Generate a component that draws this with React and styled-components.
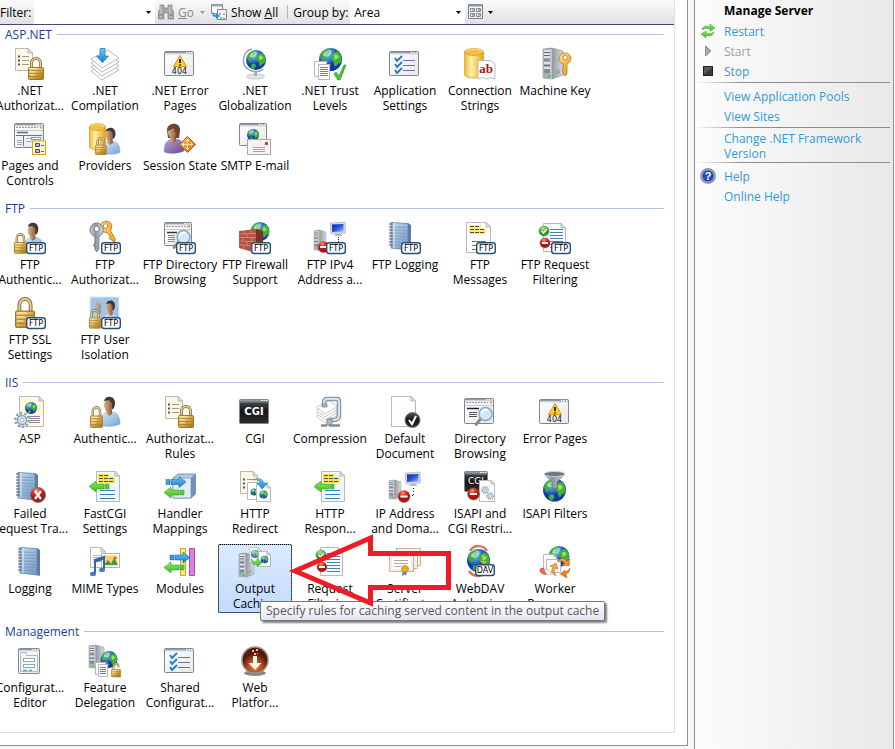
import React from 'react';
import styled, { createGlobalStyle } from 'styled-components';

//ESTILO
const GlobalStyle = createGlobalStyle`
    * {
        box-sizing: border-box;
    }

    body {
        margin: 0;
        background: #f7f7f7;
        color: #000;
        font-family: "Open Sans", "Noto Sans", sans-serif;
        font-size: 12px;
        line-height: 15px;
    }

    button, input, select {
        font: inherit;
        color: inherit;
    }
`
const Page = styled.div`
    display: flex;
    gap: 6px;
    min-height: 100vh;
    padding-right: 1px;
`
const Workspace = styled.main`
    flex: 1;
    min-width: 0;
    display: flex;
    margin-bottom: 3px;
    padding: 0 12px 12px 0;
    background: #fff;
    border: solid #919191;
    border-width: 0 1px 1px 0;
`
const FeatureView = styled.div`
    position: relative;
    flex: 1;
    min-width: 0;
    overflow: hidden;
    border: solid #dfdfdf;
    border-width: 0 1px 1px 0;
`
const Toolbar = styled.div`
    display: flex;
    align-items: center;
    height: 25px;
    background: linear-gradient(#fafafa, #e2e0e1);
    border-bottom: 1px solid #4b4277;
    white-space: nowrap;
`
const FieldLabel = styled.label`
    width: ${props => props.$width}px;
    flex: none;
`
const Combo = styled.div`
    display: flex;
    align-items: center;
    width: ${props => props.$width}px;
    height: 24px;
    padding-right: 4px;
    background: #fff;
`
const ComboInput = styled.input`
    flex: 1;
    min-width: 0;
    height: 22px;
    padding: 0 4px;
    border: 0;
    outline: 0;
    background: transparent;
`
const ComboSelect = styled.select`
    flex: 1;
    min-width: 0;
    height: 22px;
    padding: 0 4px;
    border: 0;
    outline: 0;
    appearance: none;
    background: transparent;
`
const ToolButton = styled.button`
    display: flex;
    align-items: center;
    gap: 4px;
    height: 22px;
    padding: 0 3px;
    border: 0;
    background: transparent;
    color: ${props => props.disabled ? '#8b8b8b' : '#000'};
`
const Separator = styled.span`
    width: 1px;
    height: 14px;
    margin: 0 5px 0 6px;
    background: #bdb9b0;
`
const Group = styled.section`
    & + & {
        margin-top: 3px;
    }
`
const GroupTitle = styled.h2`
    display: flex;
    align-items: center;
    gap: 5px;
    height: 18px;
    margin: 0 10px 3px 5px;
    font-size: 12px;
    font-weight: 400;
    color: #1e3c9c;

    &::after {
        content: '';
        flex: 1;
        height: 1px;
        background: #b4c2e2;
    }
`
const Grid = styled.div`
    display: grid;
    grid-template-columns: repeat(auto-fill, 74px);
    gap: 6px 1px;
    margin: 0 10px 0 -7px;
    padding-bottom: 6px;
`
const Item = styled.button`
    display: flex;
    flex-direction: column;
    align-items: center;
    height: 69px;
    padding: 2px 0 0;
    border: 0;
    border-radius: 2px;
    background: ${props => props.$selected ? 'linear-gradient(#dcebfc, #c1dbfc)' : 'transparent'};
    box-shadow: ${props => props.$selected ? 'inset 0 0 0 1px #7da2ce' : 'none'};
    outline: ${props => props.$selected ? '1px dotted #000' : '0'};
    outline-offset: -1px;
`
const ItemIcon = styled.svg`
    flex: none;
    width: 32px;
    height: 32px;
    margin-bottom: 3px;
    overflow: visible;
`
const ItemLine = styled.span`
    white-space: nowrap;
`
const Tooltip = styled.div`
    position: absolute;
    left: 260px;
    top: 601px;
    height: 20px;
    padding: 1px 5px;
    border: 1px solid #767676;
    border-radius: 2px;
    background: linear-gradient(#fff, #e4e5f0);
    box-shadow: 2px 2px 2px rgba(0, 0, 0, 0.5);
    color: #575757;
    white-space: nowrap;
`
const Pointer = styled.svg`
    position: absolute;
    left: 288px;
    top: 530px;
    width: 166px;
    height: 80px;
    pointer-events: none;
`
const Actions = styled.aside`
    flex: none;
    width: 200px;
    padding-right: 3px;
    border: solid #919191;
    border-width: 0 1px;
    background: linear-gradient(90deg, #fcfcfc, #e9e9e9);
`
const ActionGroup = styled.div`
    padding: 3px 0 1px;

    &:first-child {
        padding-top: 1px;
    }

    &:not(:first-child)::before {
        content: '';
        display: block;
        height: 1px;
        margin: -3px 0 3px;
        background: linear-gradient(90deg, transparent, #8c8c8c 25%);
    }
`
const ActionTitle = styled.h2`
    height: 20px;
    margin: 0;
    padding-left: 29px;
    font-size: 12px;
    line-height: 20px;
`
const ActionLink = styled.a`
    display: flex;
    align-items: center;
    gap: 8px;
    min-height: 20px;
    padding: 0 20px 0 5px;
    color: ${props => props['aria-disabled'] ? '#a0a0a0' : '#3399d6'};
    text-decoration: none;
`
const SmallIcon = styled.svg`
    flex: none;
    width: 16px;
    height: 16px;
`
const Caret = styled.svg`
    flex: none;
    width: 5px;
    height: 3px;
    fill: ${props => props.$muted ? '#9a9a9a' : '#000'};
`

//PARTES DOS ICONES
const HiddenSvg = styled.svg`
    position: absolute;
    width: 0;
    height: 0;
`
const Defs = () => (
    <HiddenSvg aria-hidden="true">
        <defs>
            <linearGradient id="gold" x2="1" y2="1"><stop offset="0" stopColor="#f8e29c" /><stop offset=".5" stopColor="#d9ac4a" /><stop offset="1" stopColor="#a0721c" /></linearGradient>
            <linearGradient id="drum"><stop offset="0" stopColor="#f0b730" /><stop offset=".35" stopColor="#fff2ad" /><stop offset="1" stopColor="#e99f16" /></linearGradient>
            <radialGradient id="sea" cx=".35" cy=".25"><stop offset="0" stopColor="#c9f0ff" /><stop offset=".4" stopColor="#4796e6" /><stop offset="1" stopColor="#1038a8" /></radialGradient>
            <linearGradient id="steel"><stop offset="0" stopColor="#d3d7dc" /><stop offset=".4" stopColor="#8b929a" /><stop offset="1" stopColor="#d7dbdf" /></linearGradient>
            <linearGradient id="shirt" x2="1" y2="1"><stop offset="0" stopColor="#d9e9f7" /><stop offset="1" stopColor="#74a5d8" /></linearGradient>
            <linearGradient id="violet" x2="1" y2="1"><stop offset="0" stopColor="#c0a4d8" /><stop offset="1" stopColor="#684691" /></linearGradient>
            <linearGradient id="skin" x2="1"><stop offset="0" stopColor="#e0b088" /><stop offset="1" stopColor="#85553a" /></linearGradient>
            <linearGradient id="frame" x2="1" y2="1"><stop offset="0" stopColor="#fff" /><stop offset="1" stopColor="#e4e8ec" /></linearGradient>
            <linearGradient id="night" x2="0" y2="1"><stop offset="0" stopColor="#555" /><stop offset=".5" stopColor="#151515" /><stop offset="1" stopColor="#303030" /></linearGradient>
            <linearGradient id="blue" x2="0" y2="1"><stop offset="0" stopColor="#67c8f7" /><stop offset="1" stopColor="#1b7ecb" /></linearGradient>
            <linearGradient id="green" x2="0" y2="1"><stop offset="0" stopColor="#93ea60" /><stop offset="1" stopColor="#38bb22" /></linearGradient>
            <linearGradient id="orange" x2="1" y2="1"><stop offset="0" stopColor="#ffc45b" /><stop offset="1" stopColor="#e3640f" /></linearGradient>
            <linearGradient id="brass" x2="1" y2="1"><stop offset="0" stopColor="#ffe28a" /><stop offset="1" stopColor="#e8961c" /></linearGradient>
            <linearGradient id="book" x2="1" y2="1"><stop offset="0" stopColor="#c5dcf2" /><stop offset="1" stopColor="#6c93c1" /></linearGradient>
            <radialGradient id="red" cx=".4" cy=".2"><stop offset="0" stopColor="#ff9a82" /><stop offset=".5" stopColor="#df3425" /><stop offset="1" stopColor="#a91612" /></radialGradient>
            <radialGradient id="leaf" cx=".4" cy=".2"><stop offset="0" stopColor="#b8edaa" /><stop offset="1" stopColor="#2e942e" /></radialGradient>
            <radialGradient id="copper" cx=".5" cy=".75"><stop offset="0" stopColor="#e98747" /><stop offset=".6" stopColor="#a3451b" /><stop offset="1" stopColor="#551a0a" /></radialGradient>
            <linearGradient id="screen" x2="1" y2="1"><stop offset="0" stopColor="#0720a8" /><stop offset=".5" stopColor="#2455df" /><stop offset="1" stopColor="#9bc4ff" /></linearGradient>
        </defs>
    </HiddenSvg>
);

const At = ({ x = 0, y = 0, s = 1, sy = s, children }) => <g transform={`translate(${x} ${y}) scale(${s} ${sy})`}>{children}</g>;

const Lock = ({ open, ...pos }) => {
    const shackle = open ? 'M4 11V5a4 4 0 0 1 8 0v2' : 'M3.5 12V6a4.5 4.5 0 0 1 9 0v6';

    return(
        <At {...pos}>
            <path d={shackle} fill="none" stroke="#8a6b2b" strokeWidth="3" />
            <path d={shackle} fill="none" stroke="#e6d09a" strokeWidth="1.5" />
            <rect x=".5" y="10.5" width="15" height="12" rx="1" fill="url(#gold)" stroke="#a07626" />
            <path d="M1 13.5h14M1 16.5h14M1 19.5h14" stroke="#a87c28" strokeWidth=".8" />
            <path d="M2 11.8h8M2 14.8h6M2 17.8h5" stroke="#fdf0bf" strokeWidth=".8" />
        </At>
    );
};

const Globe = ({ r = 11, ...pos }) => (
    <At {...pos} s={r / 11}>
        <circle r="11" fill="url(#sea)" />
        <path d="M-9-5C-7-9-3-10.5 0-10.5C-1-8-2-8-1-6C-3-4-4-4-4-1C-6 0-5 2-7 2C-9 0-10-2-9-5ZM1-4C3-8 6-7 7-8C10-5 11-2 10.5 2C9 5 7 3 6 6C4 8 3 5 3 2C1 1-1-1 1-4ZM-5 5C-2 3 0 5 0 7C-1 9-2 10-3 10C-5 9-6 8-5 5Z" fill="#3fb03a" />
        <path d="M3-4C5-6 7-5 8-2C6-1 5 1 4 0ZM-7-4L-3-8L-5-3Z" fill="#9be04e" />
        <ellipse cx="-3" cy="-6" rx="4.5" ry="2.5" fill="#fff" opacity=".4" transform="rotate(-30 -3 -6)" />
    </At>
);

const Sheet = ({ x = 0, y = 0, w = 24, h = 30, fill = '#fdfdfd', fold = 5 }) => (
    <At x={x} y={y}>
        <path d={`M.5 .5H${w - fold}L${w - 0.5} ${fold}V${h - 0.5}H.5Z`} fill={fill} stroke="#b7b9bb" />
        <path d={`M${w - fold} .5V${fold}H${w - 0.5}Z`} fill="#e6e6e6" stroke="#a8aaac" strokeWidth=".8" />
    </At>
);

const Lines = ({ x, y, w, n = 4, step = 3, stroke = '#5279ad' }) => (
    <path d={Array.from({ length: n }, (_, i) => `M${x} ${y + i * step}h${w}`).join('')} stroke={stroke} fill="none" />
);

const Window = ({ x = 0, y = 3, w = 30, h = 25, fill = 'url(#frame)' }) => (
    <At x={x} y={y}>
        <rect x=".5" y=".5" width={w - 1} height={h - 1} rx="1" fill={fill} stroke="#7f878e" />
        <path d={`M1 1.5H${w - 1}`} stroke="#8d99a5" strokeWidth="1.6" />
        <path d={`M${w - 8} 1.5h1.5m1 0h1.5m1 0h1.5`} stroke="#fff" />
        <path d={`M1 3H${w - 1}`} stroke="#b9c3cc" strokeWidth=".6" />
    </At>
);

const BrowserWindow = ({ y = 2, w = 30, h = 25 }) => (
    <g>
        <Window y={y} w={w} h={h} />
        <path d={`M2 ${y + 4.5}h22`} stroke="#9a9a9a" strokeDasharray="2 1" />
        <path d={`M${w - 4} ${y + 4.5}h2`} stroke="#e79a22" strokeWidth="2" />
        <path d={`M1 ${y + 7.5}h${w - 2}`} stroke="#c5cad0" />
    </g>
);

const Server = pos => (
    <At {...pos}>
        <path d="M0 1L9 0L20 3V27L9 31L0 30Z" fill="url(#steel)" stroke="#81878d" strokeWidth=".6" />
        <path d="M0 1H8V31L0 30Z" fill="#a7aeb5" />
        <path d="M1 3h6M1 6h6M1 9h6M1 15h6M1 20h6" stroke="#eef1f4" strokeWidth="1.4" />
        <path d="M1 4.5h6M1 7.5h6M1 12h6M1 17.5h6M1 22h6M1 24h6" stroke="#5b636c" strokeWidth=".9" />
        <path d="M8 1V31" stroke="#e8ebee" />
        <path d="M13 24l4-2m-4 4l4-2" stroke="#7f858b" strokeWidth=".8" />
        <rect x="5" y="27" width="3" height="2.5" fill="#4ad52c" />
    </At>
);

const User = ({ body = 'url(#shirt)', hair = '#3d3936', female, ...pos }) => (
    <At {...pos}>
        <path d="M0 29C0 20 3 17 8 16H13C18 17 20 21 20 28C15 31 4 31 0 29Z" fill={body} stroke="#7292b5" strokeWidth=".4" />
        <path d="M6 14H12V18L9 20L6 17Z" fill="url(#skin)" />
        {female && <path d="M3 7C3-1 17-2 16 8L15 15H10L4 15Z" fill={hair} />}
        <ellipse cx="8.5" cy="9" rx="4.5" ry="6.5" fill="url(#skin)" />
        <path d={female ? 'M4 8C4 0 13 0 15 6L15 14L11 9L10 5Z' : 'M4 5C5-1 15-1 15 7C15 11 13 14 12 13V7L9 4Z'} fill={hair} />
    </At>
);

const Drum = ({ w = 20, h = 30 }) => (
    <g stroke="#d79a25" strokeWidth=".7">
        <path d={`M.5 4V${h - 3}C2 ${h + 1} ${w - 2} ${h + 1} ${w - 0.5} ${h - 3}V4Z`} fill="url(#drum)" />
        <ellipse cx={w / 2} cy="4" rx={w / 2 - 0.5} ry="3.5" fill="#f6bd42" />
        <path d={`M2 3Q${w / 2} -1 ${w - 2} 3`} fill="none" stroke="#fff3b8" />
    </g>
);

const Badge = ({ x = 12, y = 20, text = 'FTP' }) => (
    <g>
        <rect x={x + 0.7} y={y + 0.7} width="18.6" height="10.8" rx="2.5" fill="#fff" stroke="#28516f" strokeWidth="1.4" />
        <text x={x + 10} y={y + 9} fontFamily="DejaVu Sans" fontSize="8" textAnchor="middle" fill="#000">{text}</text>
    </g>
);

const Stop = ({ x, y, r = 5.5 }) => (
    <g>
        <circle cx={x} cy={y} r={r} fill="url(#red)" stroke="#c3493b" strokeWidth=".5" />
        <path d={`M${x - r * 0.6} ${y}h${r * 1.2}`} stroke="#fff" strokeWidth="2" />
    </g>
);

const Tick = ({ x, y, r = 5 }) => (
    <g>
        <circle cx={x} cy={y} r={r} fill="url(#leaf)" stroke="#348b34" strokeWidth=".5" />
        <path d={`M${x - 2.5} ${y}l2 2l3.5-4`} stroke="#fff" strokeWidth="1.5" fill="none" />
    </g>
);

const Arrow = ({ x, y, right }) => (
    <At x={x} y={y}>
        <path
            d={right ? 'M0 3.5h1.5v5H0ZM2.5 3.5H4v5H2.5ZM5 3.5h8V.5L20 6L13 11.5V8.5H5Z' : 'M20 3.5h-1.5v5H20ZM17.5 3.5H16v5h1.5ZM15 3.5H7V.5L0 6L7 11.5V8.5h8Z'}
            fill={right ? 'url(#blue)' : 'url(#green)'}
            stroke={right ? '#146aab' : '#2f9d27'}
            strokeWidth=".6"
        />
    </At>
);

const Gear = ({ x, y, s = 1 }) => (
    <At x={x} y={y} s={s}>
        <circle r="6.8" fill="none" stroke="#849eba" strokeWidth="2.4" strokeDasharray="2.2 2.07" />
        <circle r="4.6" fill="#dce7f2" stroke="#859fbb" strokeWidth="1.5" />
        <circle r="2" fill="#fff" stroke="#8da4bb" strokeWidth=".8" />
    </At>
);

const Notebook = pos => (
    <At {...pos}>
        <path d="M19 1L22 3V29L18 28Z" fill="#5b7ca3" />
        <path d="M2 .5L19 1.5V28L2 26Z" fill="url(#book)" stroke="#5f83ab" strokeWidth=".8" />
        <path d="M6 5l11 .5M6 8l11 .5M6 11l11 .5M6 14l11 .5M6 17l11 .5M6 20l11 .5M6 23l11 .5" stroke="#7799c2" strokeWidth=".8" />
        <path d="M5 1V26" stroke="#e4effa" strokeWidth=".8" />
        <path d="M0 2h4M0 5h4M0 8h4M0 11h4M0 14h4M0 17h4M0 20h4M0 23h4" stroke="#555f6b" strokeWidth="1.2" />
    </At>
);

const Monitor = pos => (
    <At {...pos}>
        <path d="M0 1L15 0L15.5 11L1 12Z" fill="#d4d8df" stroke="#a9adb5" strokeWidth=".6" />
        <path d="M2 2.5L13.5 2V9.5L2 10Z" fill="url(#screen)" />
        <path d="M6 12h5l1 2H4Z" fill="#b4b8be" />
    </At>
);

const Glass = ({ x, y, r = 6.5 }) => (
    <g>
        <path d={`M${x - r + 2} ${y + r - 2}L${x - r - 3} ${y + r + 4}`} stroke="#858b91" strokeWidth="2.8" strokeLinecap="round" />
        <circle cx={x} cy={y} r={r} fill="#cfe8fb" stroke="#93a7bb" strokeWidth="1.5" />
        <path d={`M${x - 4} ${y - 1}q2-4 6-3`} stroke="#fff" strokeWidth="2" fill="none" />
    </g>
);

const Key = ({ fill = 'url(#brass)', stroke = '#b57a18', ...pos }) => (
    <At {...pos}>
        <path d="M6 0C10 0 12 3 12 6C12 8 10 10 8 11V21L6 23L4.5 21V19L3 18L4.5 16V11C2 10 0 8 0 6C0 3 2 0 6 0ZM6 2.5A2.2 2.2 0 1 0 6.1 2.5Z" fill={fill} stroke={stroke} strokeWidth=".8" fillRule="evenodd" />
    </At>
);

const Error404 = () => (
    <g>
        <Window />
        <path d="M16 7.5L22.5 18.5H9.5Z" fill="#ffd02b" stroke="#d39a13" strokeLinejoin="round" />
        <path d="M16 11v4M16 16.2v1.3" stroke="#111" strokeWidth="1.7" />
        <text x="15.5" y="26" fontFamily="DejaVu Sans" fontSize="8" textAnchor="middle" fill="#111">404</text>
    </g>
);

const Checklist = () => (
    <g>
        <Window />
        <path d="M6 10l2 3l5-5M6 16l2 3l5-5M6 22l2 3l5-5" fill="none" stroke="#217cc2" strokeWidth="1.8" />
        <path d="M14 12.5h12M14 17.5h12M14 22.5h12" stroke="#74709c" />
    </g>
);

const Rules = () => (
    <g>
        <Sheet x={1} w={18} h={23} fill="#fdf8df" />
        <path d="M4 8.5h2M4 12.5h2M4 16.5h2" stroke="#5b566b" strokeWidth="2" />
        <path d="M8 8.5h7M8 12.5h7M8 16.5h7" stroke="#9a96a5" />
    </g>
);

const Response = () => (
    <g>
        <Sheet x={7} w={24} h={31} fill="#eef7fb" />
        <path d="M9 4.5h11M9 7.5h17M9 10.5h17" stroke="#f5de65" strokeWidth="3" />
        <path d="M10 4.5h9M10 7.5h15M10 10.5h15" stroke="#65551a" strokeDasharray="4 1" />
        <Lines x={11} y={19.5} w={15} n={3} step={4} stroke="#347fbc" />
        <Arrow x={0} y={9.5} />
    </g>
);

const Stack = () => (
    <g fill="#fff" stroke="#a6a8aa" strokeWidth=".8">
        {[12, 8, 4, 0].map(d => <path key={d} d={`M2 ${11 + d}L19 ${2 + d}L30 ${10 + d}L13 ${20 + d}Z`} />)}
    </g>
);

const Filtering = ({ x = 0 }) => (
    <g>
        <Sheet x={x + 4} y={1} w={23} h={29} fill="#fafcff" />
        <Lines x={x + 11} y={7.5} w={13} n={7} step={3} stroke="#4c7fad" />
        <Tick x={x + 5} y={9} />
        <Stop x={x + 6} y={21} r={5} />
    </g>
);

//ICONES
const icons = {
    netAuthorization: <g><Rules /><Lock x={14} y={9} /></g>,
    compilation: <g><Stack /><path d="M11 .5H16V8H19.5L13.5 14.5L7.5 8H11Z" fill="url(#blue)" stroke="#1980c1" strokeWidth=".8" /></g>,
    error404: <Error404 />,
    globalization: (
        <g>
            <ellipse cx="16.5" cy="28.5" rx="9" ry="2.5" fill="#e3e5e7" stroke="#b0b4b8" strokeWidth=".7" />
            <path d="M16 24h2v4h-3Z" fill="#a1a7ad" />
            <path d="M13 1C3 3 2 17 9 21C14 25 21 24 24 21" fill="none" stroke="#98a0a8" strokeWidth="1.5" />
            <Globe x={17} y={12} r={10} />
        </g>
    ),
    trust: (
        <g>
            <Globe x={16.5} y={11.5} r={11.5} />
            <Sheet x={0} y={13} w={13} h={16} fold={0} />
            <Sheet x={4} y={16} w={12} h={16} fold={0} />
            <Lines x={6} y={19.5} w={8} n={5} step={2} stroke="#5489c7" />
            <path d="M20 26L22 24L25 28L30 17H32L26 32H24Z" fill="#42ca28" stroke="#219114" strokeWidth=".6" />
        </g>
    ),
    checklist: <Checklist />,
    connection: (
        <g>
            <Drum />
            <path d="M14 12.5H27L31 16V31L27 29.5L23 31L19 29.5L14 31Z" fill="#fff" stroke="#bbb" />
            <text x="22" y="25" fontFamily="Liberation Serif" fontWeight="700" fontSize="13" textAnchor="middle" fill="#a51616">ab</text>
        </g>
    ),
    machineKey: <g><Server x={4} /><Key x={20} y={5} /></g>,
    pages: (
        <g>
            <BrowserWindow y={0} />
            <path d="M3 9.5h11" stroke="#666" strokeWidth="1.5" />
            <path d="M2 12.5h26" stroke="#467cc9" />
            <path d="M2 12.5h5" stroke="#e23b2d" />
            <path d="M9.5 12v11" stroke="#467cc9" />
            <Lines x={3} y={17.5} w={5} n={3} step={2} stroke="#aaa" />
            <Lines x={12} y={15.5} w={6} n={2} stroke="#aaa" />
            <rect x="17.5" y="14.5" width="9" height="2" fill="#fff" stroke="#999" />
            <rect x="18.5" y="18" width="13" height="13.5" fill="#fff8c4" stroke="#c8a81e" />
            <path d="M21.5 20.5h4v3h-4ZM21.5 26.5h4v3h-4Z" fill="#c3b0dc" stroke="#54447a" />
            <path d="M27 22.5h3M27 28.5h3" stroke="#665c75" />
        </g>
    ),
    providers: <g><Drum w={17} h={27} /><User x={13} y={4} s={0.9} /><Lock x={6} y={14} s={0.72} sy={0.78} /></g>,
    session: (
        <g>
            <User female body="url(#violet)" hair="#704229" />
            <path d="M23.5 13.5L31.5 21.5L23.5 29.5L15.5 21.5Z" fill="url(#orange)" stroke="#c84d10" />
            <path d="M19 21.5h9M23.5 17v9" stroke="#ffe0a3" />
            <path d="M18 21.5l2-2v4ZM29 21.5l-2-2v4ZM23.5 16l-2 2h4ZM23.5 27l-2-2h4Z" fill="#fff2cc" />
        </g>
    ),
    smtp: (
        <g>
            <Window y={0} w={28} h={23} />
            <Globe x={14} y={12} r={6} />
            <rect x="8.5" y="16.5" width="23" height="15" fill="#f3f3f1" stroke="#aaa" />
            <rect x="26" y="19" width="3" height="3" fill="#e2372c" />
            <Lines x={14} y={24.5} w={12} n={3} step={2} stroke="#a5a5a5" />
        </g>
    ),
    ftpAuthentication: <g><User x={10} s={0.95} /><Lock x={0} y={11} s={0.8} sy={0.9} /><Badge /></g>,
    ftpAuthorization: (
        <g>
            <At x={9} y={3}><g transform="rotate(-30)"><Key /></g></At>
            <Key x={1} y={1} s={1.1} sy={1.25} fill="url(#steel)" stroke="#6f757c" />
            <Badge />
        </g>
    ),
    ftpBrowsing: (
        <g>
            <BrowserWindow y={0} w={28} h={24} />
            <path d="M3 10.5h10" stroke="#333" strokeWidth="1.5" />
            <Lines x={4} y={13.5} w={7} n={4} step={2} stroke="#888" />
            <Glass x={19.5} y={15} />
            <Badge />
        </g>
    ),
    firewall: (
        <g>
            <Globe x={21} y={9.5} r={9.5} />
            <path d="M0 9L17 7L24 9V30L17 31L0 26Z" fill="#b25440" />
            <path d="M17 7L24 9V30L17 31Z" fill="#7d3024" />
            <path d="M0 12L17 11.5M0 15.5L17 15.5M0 19L17 20M0 22.5L17 24.5M5 9v3M12 8v3.500M8 12v3.5M4 15.5V19M13 15.5v4M8 19v4M5 23v4M13 24v5" stroke="#d8917a" strokeWidth=".8" />
            <Badge />
        </g>
    ),
    ftpAddress: (
        <g>
            <Server x={0} y={8} s={0.6} sy={0.66} />
            <Monitor x={16} y={0} />
            <path d="M24.5 15v5" stroke="#111" strokeDasharray="1 1" />
            <Stop x={9.5} y={25} />
            <Badge />
        </g>
    ),
    ftpLogging: <g><Notebook x={0} y={0} /><Badge /></g>,
    ftpMessages: (
        <g>
            <Sheet x={2} w={25} h={31} />
            <path d="M5 4.5h12M5 7.5h17M5 10.5h17" stroke="#f8e88c" strokeWidth="3" />
            <path d="M6 4.5h10M6 7.5h15M6 10.5h15" stroke="#59511f" strokeDasharray="4 1" />
            <Lines x={8} y={19.5} w={14} n={3} step={4} stroke="#347fbc" />
            <Badge />
        </g>
    ),
    ftpFiltering: <g><Filtering /><Badge /></g>,
    ftpSsl: <g><Lock x={1} y={0} s={1.25} sy={1.35} /><Badge /></g>,
    ftpIsolation: (
        <g>
            <rect x="1" width="29" height="21" fill="#9fc5e8" stroke="#dce9f5" />
            <g opacity=".55"><User x={3} y={3} s={0.75} hair="#aeb8c2" /></g>
            <User x={14} y={3} s={0.8} />
            <Lock x={0} y={12} s={0.75} sy={0.85} />
            <Badge />
        </g>
    ),
    asp: (
        <g>
            <Sheet x={5} w={25} h={31} fill="#fdf9df" />
            <Globe x={17} y={12} r={6} />
            <Lines x={15} y={20.5} w={11} n={4} step={2} stroke="#8b8899" />
            <Gear x={8} y={24} />
        </g>
    ),
    authentication: <g><User x={11} /><Lock x={1} y={10} s={0.8} sy={0.95} /></g>,
    cgi: (
        <g>
            <Window fill="url(#night)" />
            <text x="15" y="19" fontFamily="DejaVu Sans" fontWeight="700" fontSize="10" textAnchor="middle" fill="#fff">CGI</text>
        </g>
    ),
    compression: (
        <g>
            <At x={1} y={3} s={0.75}><Stack /></At>
            <path d="M10 8C10 3 11 3 14 3H23C25 3 25 4 25 7V19C25 23 23 24 19 24H15" fill="none" stroke="#75879a" strokeWidth="4.5" />
            <path d="M10 8C10 3 11 3 14 3H23C25 3 25 4 25 7V19C25 23 23 24 19 24H15" fill="none" stroke="#d3e1ed" strokeWidth="2.5" />
            <path d="M8 8h5v3H8ZM13 23h5v6h-5Z" fill="#aab9c8" stroke="#66788a" strokeWidth=".7" />
            <path d="M7 29.500h6M15 29.500h11" stroke="#848b91" strokeWidth="2.5" />
        </g>
    ),
    defaultDocument: (
        <g>
            <Sheet x={2} w={25} h={31} />
            <circle cx="23.5" cy="24" r="7.5" fill="url(#night)" stroke="#777" />
            <path d="M20 24l3 4l4-8" fill="none" stroke="#fff" strokeWidth="2" />
        </g>
    ),
    browsing: (
        <g>
            <BrowserWindow y={2} w={30} h={26} />
            <path d="M3 12.5h12" stroke="#222" strokeWidth="1.5" />
            <Lines x={5} y={16.5} w={8} n={3} step={2} stroke="#555" />
            <Glass x={21.5} y={18} />
        </g>
    ),
    failed: (
        <g>
            <Notebook x={2} y={1} />
            <circle cx="24" cy="24" r="7.5" fill="url(#red)" stroke="#777" />
            <path d="M21 20l6 8M27 20l-6 8" stroke="#fff" strokeWidth="2.2" />
        </g>
    ),
    response: <Response />,
    handler: (
        <g>
            <path d="M9 7L14 3H31.5V23L27 27H9Z" fill="#b8cbe3" stroke="#7792b3" />
            <path d="M9 7H27V27H9Z" fill="#e2edf8" stroke="#90a6c1" />
            <path d="M27 7L31 3V23L27 27Z" fill="#7390b7" />
            <Arrow x={2} y={5} right />
            <Arrow x={0} y={15.5} />
        </g>
    ),
    redirect: (
        <g>
            <Rules />
            <Sheet x={8} y={11} w={14} h={18} fold={4} />
            <Globe x={15} y={21} r={3.5} />
            <Sheet x={17} y={13} w={15} h={18} fold={4} />
            <Globe x={24.5} y={23.5} r={4} />
            <path d="M14 9C19 6 24 8 25 12H29L23 18L18 12H21C20 9 18 8 14 9Z" fill="url(#blue)" stroke="#2776ad" strokeWidth=".5" />
        </g>
    ),
    address: (
        <g>
            <Server x={0} y={9} s={0.6} sy={0.62} />
            <Monitor x={16} y={1} />
            <path d="M24.5 17v7M24 24.5h-4" fill="none" stroke="#111" strokeDasharray="1 2" />
            <Stop x={15} y={25.5} r={6} />
        </g>
    ),
    restrictions: (
        <g>
            <Window y={0} w={24} h={21} fill="url(#night)" />
            <text x="12" y="13" fontFamily="DejaVu Sans" fontSize="9" textAnchor="middle" fill="#fff">CGI</text>
            <Sheet x={15} y={9} w={16} h={22} fold={4} />
            <Gear x={21} y={19} s={0.5} />
            <Gear x={26} y={25} s={0.5} />
            <Stop x={9.5} y={23} r={6} />
        </g>
    ),
    isapiFilters: (
        <g>
            <Globe x={15.5} y={19} r={11.5} />
            <path d="M5 3L13 11V17L18 18V11L26 3Z" fill="url(#steel)" stroke="#626c77" strokeWidth=".6" />
            <ellipse cx="15.5" cy="3" rx="10.5" ry="2.5" fill="#6b7680" stroke="#c9d1d9" />
        </g>
    ),
    logging: <Notebook x={4} y={1} />,
    mime: (
        <g>
            <Sheet x={1} y={1} w={16} h={21} />
            <Lines x={4} y={9.5} w={9} n={4} step={2} stroke="#bbb" />
            <rect x="12.5" y="7.5" width="18" height="14" fill="#fff" stroke="#b5b5b5" />
            <path d="M14.5 9.5h14v10h-14Z" fill="#f6d36b" />
            <path d="M15 19l4-5l3 4l3-6l4 7Z" fill="#3c9a3e" />
            <circle cx="26" cy="12" r="1.5" fill="#e75b2a" />
            <path d="M6 27V14L15 11V23" fill="none" stroke="#3269ad" strokeWidth="2" />
            <path d="M6 15L15 12" stroke="#3269ad" strokeWidth="3" />
            <ellipse cx="4" cy="28" rx="3" ry="2.2" fill="#477ebd" />
            <ellipse cx="13" cy="24" rx="3" ry="2.2" fill="#477ebd" />
        </g>
    ),
    modules: (
        <g>
            <path d="M16.5 2.5h5v27h-5Z" fill="#fae878" stroke="#caa823" />
            <path d="M25.5 2.5h5v27h-5Z" fill="#dd80db" stroke="#a653a7" />
            <Arrow x={6} y={5.5} right />
            <Arrow x={0} y={15.5} />
        </g>
    ),
    caching: (
        <g>
            <Server x={0} y={7} s={0.75} sy={0.78} />
            <g opacity=".7"><Sheet x={10} y={1} w={13} h={16} fold={4} /><Globe x={16} y={8} r={4} /></g>
            <Sheet x={19} y={5} w={13} h={16} fold={4} />
            <Globe x={25.5} y={13.5} r={3.8} />
            <path d="M12 13Q14 17 18 15V12.5L23 17L18 20.5V18.5Q13 19 12 13Z" fill="url(#green)" stroke="#2c941f" strokeWidth=".5" />
        </g>
    ),
    filtering: <Filtering x={2} />,
    certificates: (
        <g>
            <g fill="#f6eee0" stroke="#b9a58a" strokeDasharray="2 .5">
                <rect x="7.5" y="2.5" width="24" height="17" />
                <rect x="4.5" y="5.5" width="24" height="17" />
                <rect x=".5" y="9.5" width="24" height="16" />
            </g>
            <rect x="3" y="12" width="19" height="11" fill="#fff" />
            <Lines x={5} y={14.5} w={14} n={2} stroke="#b2aaa0" />
            <Lines x={6} y={20.5} w={6} n={1} stroke="#aaa" />
            <path d="M14 25l-1 5l3-2l1 2l1-5Z" fill="#3979ca" />
            <circle cx="16" cy="23" r="3.5" fill="#e9ab25" stroke="#b87814" strokeWidth=".6" />
        </g>
    ),
    webdav: (
        <g>
            <path d="M6 5C10-2 20-1 23 5M5 25C9 31 16 31 19 28" fill="none" stroke="#d97855" strokeWidth="2.5" />
            <Globe x={14.5} y={14.5} r={11.5} />
            <path d="M16 15h7l-2 4Z" fill="url(#orange)" />
            <Badge x={11} y={18} text="DAV" />
        </g>
    ),
    worker: (
        <g>
            <Globe x={20} y={10.5} r={10.5} />
            <Sheet x={4} y={8} w={14} h={16} fold={3} />
            <Sheet x={7} y={13} w={15} h={14} fold={3} />
            <path d="M1 24C1 22 4 21 6 24L9 28C6 29 1 28 1 24Z" fill="#ef6555" stroke="#ac4136" strokeWidth=".6" />
            <path d="M5 23l5 1l3 4l-5 1Z" fill="#f2f2f2" stroke="#aaa" strokeWidth=".5" />
            <path d="M18 15Q24 10 28 15L31 13L30 20L23 19L26 17Q23 14 18 15ZM31 22Q31 27 27 28L28 32L21 28L26 24V26Q29 25 31 22ZM17 30Q10 26 14 21L11 20L17 17L19 23L16 22Q14 26 17 30Z" fill="url(#orange)" stroke="#c75e17" strokeWidth=".5" />
        </g>
    ),
    config: (
        <g>
            <Window x={4} y={3} w={22} h={26} />
            <path d="M6.5 10.5v-3h6v3h11v16h-17Z" fill="#f3f5f7" stroke="#b3bdc7" />
            <rect x="9.5" y="13.5" width="11" height="3" fill="#fff" stroke="#9aa5b0" />
            <rect x="9.5" y="19.5" width="11" height="3" fill="#fff" stroke="#9aa5b0" />
            <path d="M9 25.5h4M15 25.5h3" stroke="#4faed3" strokeWidth="1.5" />
        </g>
    ),
    delegation: (
        <g>
            <Server x={0} y={0} s={0.75} />
            <Globe x={20} y={14.5} r={8.5} />
            <Sheet x={6} y={17} w={11} h={13} fold={0} />
            <Sheet x={9} y={19} w={10} h={13} fold={0} />
            <Lines x={11} y={22.5} w={6} n={4} step={2} stroke="#5489c7" />
            <Lock open x={22} y={18} s={0.62} />
        </g>
    ),
    platform: (
        <g>
            <ellipse cx="16" cy="28" rx="11" ry="3" fill="#52565a" opacity=".7" />
            <circle cx="16" cy="15" r="13" fill="url(#copper)" stroke="#9b8e85" strokeWidth="1.5" />
            <path d="M14 11h4v7h4.5L16 25L9.5 18H14Z" fill="#fff3e6" />
            <path d="M13 5h2v2h-2ZM17 4h2v2h-2ZM15 8h2v2h-2ZM18 8h1v1h-1Z" fill="#f2b78c" />
        </g>
    ),
};

const groups = [
    { title: 'ASP.NET', items: [
        ['netAuthorization', '.NET', 'Authorizat...'], ['compilation', '.NET', 'Compilation'], ['error404', '.NET Error', 'Pages'], ['globalization', '.NET', 'Globalization'],
        ['trust', '.NET Trust', 'Levels'], ['checklist', 'Application', 'Settings'], ['connection', 'Connection', 'Strings'], ['machineKey', 'Machine Key'],
        ['pages', 'Pages and', 'Controls'], ['providers', 'Providers'], ['session', 'Session State'], ['smtp', 'SMTP E-mail'],
    ] },
    { title: 'FTP', items: [
        ['ftpAuthentication', 'FTP', 'Authentic...'], ['ftpAuthorization', 'FTP', 'Authorizat...'], ['ftpBrowsing', 'FTP Directory', 'Browsing'], ['firewall', 'FTP Firewall', 'Support'],
        ['ftpAddress', 'FTP IPv4', 'Address a...'], ['ftpLogging', 'FTP Logging'], ['ftpMessages', 'FTP', 'Messages'], ['ftpFiltering', 'FTP Request', 'Filtering'],
        ['ftpSsl', 'FTP SSL', 'Settings'], ['ftpIsolation', 'FTP User', 'Isolation'],
    ] },
    { title: 'IIS', items: [
        ['asp', 'ASP'], ['authentication', 'Authentic...'], ['netAuthorization', 'Authorizat...', 'Rules'], ['cgi', 'CGI'],
        ['compression', 'Compression'], ['defaultDocument', 'Default', 'Document'], ['browsing', 'Directory', 'Browsing'], ['error404', 'Error Pages'],
        ['failed', 'Failed', 'Request Tra...'], ['response', 'FastCGI', 'Settings'], ['handler', 'Handler', 'Mappings'], ['redirect', 'HTTP', 'Redirect'],
        ['response', 'HTTP', 'Respon...'], ['address', 'IP Address', 'and Doma...'], ['restrictions', 'ISAPI and', 'CGI Restri...'], ['isapiFilters', 'ISAPI Filters'],
        ['logging', 'Logging'], ['mime', 'MIME Types'], ['modules', 'Modules'], ['caching', 'Output', 'Caching'],
        ['filtering', 'Request', 'Filtering'], ['certificates', 'Server', 'Certificat...'], ['webdav', 'WebDAV', 'Authorin...'], ['worker', 'Worker', 'Processes'],
    ] },
    { title: 'Management', items: [
        ['config', 'Configurat...', 'Editor'], ['delegation', 'Feature', 'Delegation'], ['checklist', 'Shared', 'Configurat...'], ['platform', 'Web', 'Platfor...'],
    ] },
];

const actionIcons = {
    restart: <g fill="url(#green)" stroke="#349c28" strokeWidth=".5"><path d="M2 7C3 3 7 2 10 4V1L15 5L10 8V6C7 5 5 5 2 7Z" /><path d="M14 9C13 13 9 14 6 12V15L1 11L6 8V10C9 11 11 11 14 9Z" /></g>,
    start: <path d="M5.5 3L11 8L5.5 13Z" fill="#aaa" stroke="#8c8c8c" />,
    stop: <g><rect x="3.5" y="3.5" width="9" height="9" fill="#3a3a3a" stroke="#222" /><path d="M4 11L12 5V4H4Z" fill="#5a5a5a" /></g>,
    help: <g><circle cx="8" cy="8" r="7.3" fill="#234ca8" stroke="#8b96a7" strokeWidth="1.3" /><circle cx="8" cy="8" r="6.2" fill="none" stroke="#d9e2f2" strokeWidth=".8" /><text x="8" y="12" fontFamily="Liberation Sans" fontSize="11" fontWeight="700" textAnchor="middle" fill="#fff">?</text></g>,
};

const actionGroups = [
    [['Restart', 'restart'], ['Start', 'start'], ['Stop', 'stop']],
    [['View Application Pools'], ['View Sites']],
    [['Change .NET Framework Version']],
    [['Help', 'help'], ['Online Help']],
];

//COMPONENTES
const DownArrow = props => <Caret viewBox="0 0 5 3" aria-hidden="true" {...props}><path d="M0 0H5L2.5 3Z" /></Caret>;

const Feature = ({ icon, lines }) => (
    <Item type="button" $selected={icon === 'caching'}>
        <ItemIcon viewBox="0 0 32 32" aria-hidden="true">{icons[icon]}</ItemIcon>
        {lines.map(line => <ItemLine key={line}>{line}</ItemLine>)}
    </Item>
);

const FilterBar = () => (
    <Toolbar>
        <FieldLabel htmlFor="filter" $width={34}>Filter:</FieldLabel>
        <Combo $width={121}><ComboInput id="filter" type="text" /><DownArrow /></Combo>
        <ToolButton type="button" disabled>
            <SmallIcon viewBox="0 0 16 16" aria-hidden="true">
                <path d="M2 1h4v3h4V1h4v4l2 3v7h-6V9H6v6H0V8l2-3Z" fill="#a5a5a5" stroke="#858585" strokeWidth=".7" />
                <path d="M3 2v12M12 2v12" stroke="#d2d2d2" />
                <path d="M1 11h4M11 11h4" stroke="#797979" />
            </SmallIcon>
            <span><u>G</u>o</span>
        </ToolButton>
        <ToolButton type="button" aria-label="Go options" disabled><DownArrow $muted /></ToolButton>
        <ToolButton type="button">
            <SmallIcon viewBox="0 0 16 16" aria-hidden="true">
                <path d="M.5 .5h11v9H.5Z" fill="#fff" stroke="#858b91" />
                <path d="M1 1.5h10" stroke="#9ea9b4" strokeWidth="2" />
                <path d="M6.5 5.5h9v10h-9Z" fill="#f4f6f8" stroke="#7f878e" />
                <path d="M8 9h2v2H8ZM12 9h2v2h-2ZM9 13h2v2H9ZM12 13h2v2h-2Z" fill="#a9b2bd" />
                <path d="M2 7Q2 11 5 11V8.500L9 12L5 15V13Q0 13 2 7Z" fill="#1d9add" />
            </SmallIcon>
            <span>Show <u>A</u>ll</span>
        </ToolButton>
        <Separator />
        <FieldLabel htmlFor="groupBy" $width={57}>Group by:</FieldLabel>
        <Combo $width={115}>
            <ComboSelect id="groupBy" defaultValue="Area"><option>Area</option></ComboSelect>
            <DownArrow />
        </Combo>
        <ToolButton type="button" aria-label="View">
            <SmallIcon viewBox="0 0 16 16" aria-hidden="true">
                <path d="M.5 .5h14v14H.5Z" fill="#f4f5f7" stroke="#77818b" />
                <path d="M1 1.5h13" stroke="#8f9ca8" strokeWidth="2" />
                <path d="M2.5 4.5h4v3h-4ZM8.5 4.5h4v3h-4ZM2.5 9.5h4v3h-4ZM8.5 9.5h4v3h-4Z" fill="#fff" stroke="#7c8792" />
                <path d="M4 6h2" stroke="#4f9d3f" />
                <path d="M10 6h2M4 11h2" stroke="#3563b5" />
                <path d="M10 11h2" stroke="#d65c3a" />
            </SmallIcon>
            <DownArrow />
        </ToolButton>
    </Toolbar>
);

const ActionsPane = () => (
    <Actions>
        {actionGroups.map((actions, index) => (
            <ActionGroup key={index}>
                {index === 0 && <ActionTitle>Manage Server</ActionTitle>}
                {actions.map(([label, icon]) => (
                    <ActionLink key={label} href="#" aria-disabled={label === 'Start' ? true : undefined}>
                        <SmallIcon viewBox="0 0 16 16" aria-hidden="true">{actionIcons[icon]}</SmallIcon>
                        <span>{label}</span>
                    </ActionLink>
                ))}
            </ActionGroup>
        ))}
    </Actions>
);

export default () => {

    return(
        <Page>
            <GlobalStyle />
            <Defs />
            <Workspace>
                <FeatureView>
                    <FilterBar />
                    {groups.map(group => (
                        <Group key={group.title}>
                            <GroupTitle>{group.title}</GroupTitle>
                            <Grid>
                                {group.items.map(([icon, ...lines]) => <Feature key={lines.join(' ')} icon={icon} lines={lines} />)}
                            </Grid>
                        </Group>
                    ))}
                    <Tooltip role="tooltip">Specify rules for caching served content in the output cache</Tooltip>
                    <Pointer viewBox="0 0 166 80" aria-hidden="true">
                        <path d="M7 41L82.5 8V23.5H160.5V57.5H82.5V73Z" fill="none" stroke="#ee1c24" strokeWidth="5" />
                    </Pointer>
                </FeatureView>
            </Workspace>
            <ActionsPane />
        </Page>
    );
};
